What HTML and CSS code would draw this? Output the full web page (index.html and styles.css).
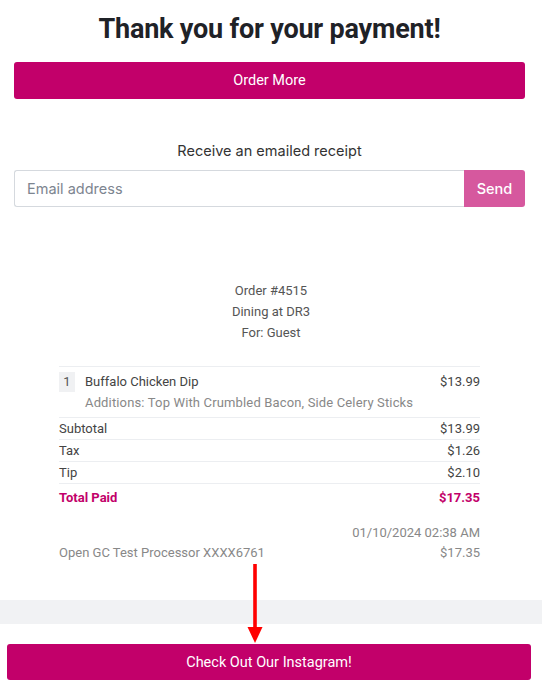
FILE: index.html
```html
<!DOCTYPE html>
<html>
<head>
<meta charset="utf-8">
<link rel="stylesheet" href="styles.css">
</head>
<body>
<main class="page">
  <section class="top">
    <h1 class="title">Thank you for your payment!</h1>
    <button class="btn btn-order">Order More</button>
    <p class="receipt-label">Receive an emailed receipt</p>
    <form class="email-form">
      <input class="email-input" type="text" placeholder="Email address">
      <button class="btn-send" type="button">Send</button>
    </form>
  </section>

  <section class="order-info">
    <div>Order #4515</div>
    <div>Dining at DR3</div>
    <div>For: Guest</div>
  </section>

  <section class="receipt">
    <div class="item-row">
      <span class="qty">1</span>
      <div class="item-main">
        <div class="item-line"><span>Buffalo Chicken Dip</span><span>$13.99</span></div>
        <div class="additions">Additions: Top With Crumbled Bacon, Side Celery Sticks</div>
      </div>
    </div>
    <div class="sum-row"><span>Subtotal</span><span>$13.99</span></div>
    <div class="sum-row"><span>Tax</span><span>$1.26</span></div>
    <div class="sum-row"><span>Tip</span><span>$2.10</span></div>
    <div class="sum-row total"><span>Total Paid</span><span>$17.35</span></div>

    <div class="payment">
      <div class="pay-date">01/10/2024 02:38 AM</div>
      <div class="pay-line"><span>Open GC Test Processor XXXX6761</span><span>$17.35</span></div>
    </div>
  </section>

  <div class="band"></div>

  <section class="bottom">
    <button class="btn btn-insta">Check Out Our Instagram!</button>
  </section>

  <svg class="arrow" width="20" height="80" viewBox="0 0 20 80">
    <rect x="8.2" y="0" width="3.6" height="66" fill="#ff0000"/>
    <polygon points="2.5,63 17.5,63 10,79" fill="#ff0000"/>
  </svg>
</main>
</body>
</html>
```

FILE: styles.css
```css
* { box-sizing: border-box; }
html, body { margin: 0; padding: 0; background: #fff; }
body {
  font-family: Roboto, "Liberation Sans", Arial, sans-serif;
  color: #333;
}
.page {
  position: relative;
  width: 542px;
  min-height: 699px;
}
.top {
  padding: 12px 17px 0 14px;
  display: flex;
  flex-direction: column;
}
.title {
  margin: 0;
  text-align: center;
  font-size: 27px;
  line-height: 34px;
  font-weight: 700;
  color: #1f2227;
  letter-spacing: -0.2px;
}
.btn {
  display: block;
  width: 100%;
  border: none;
  border-radius: 3px;
  background: #c2006a;
  color: #fff;
  font-family: Roboto, "Liberation Sans", Arial, sans-serif;
  font-size: 14.5px;
  cursor: pointer;
}
.btn-order {
  margin-top: 16px;
  height: 37px;
}
.receipt-label {
  margin: 42px 0 0;
  text-align: center;
  font-family: Inter, Roboto, sans-serif;
  font-size: 14.5px;
  line-height: 20px;
  color: #333;
}
.email-form {
  margin: 9px 0 0;
  display: flex;
  height: 37px;
}
.email-input {
  flex: 1;
  min-width: 0;
  border: 1px solid #d5d9de;
  border-right: none;
  border-radius: 3px 0 0 3px;
  padding: 0 12px;
  font-family: Inter, Roboto, sans-serif;
  font-size: 14.5px;
  color: #333;
  outline: none;
}
.email-input::placeholder { color: #7d8590; }
.btn-send {
  width: 61px;
  border: none;
  border-radius: 0 3px 3px 0;
  background: #d6589e;
  color: #fff;
  font-family: Inter, Roboto, sans-serif;
  font-size: 14.5px;
  font-weight: 500;
}
.order-info {
  margin-top: 73px;
  text-align: center;
  font-size: 13px;
  line-height: 21px;
  color: #555;
}
.receipt {
  margin: 23px 62px 0 59px;
  font-size: 13px;
  color: #444;
}
.item-row {
  display: flex;
  gap: 10px;
  border-top: 1px solid #eceef1;
  border-bottom: 1px solid #eceef1;
  padding: 5px 0 4px;
}
.qty {
  width: 16px;
  height: 20px;
  background: #f0f1f3;
  text-align: center;
  line-height: 20px;
  color: #555;
  flex: none;
}
.item-main { flex: 1; }
.item-line {
  display: flex;
  justify-content: space-between;
  line-height: 20px;
}
.additions {
  line-height: 21px;
  color: #888;
  letter-spacing: 0.15px;
}
.sum-row {
  display: flex;
  justify-content: space-between;
  line-height: 21px;
  border-bottom: 1px solid #eceef1;
}
.sum-row.total {
  border-bottom: none;
  font-weight: 700;
  color: #c2006a;
  line-height: 22px;
  padding-top: 3px;
}
.payment {
  margin-top: 14px;
  color: #888;
  line-height: 20px;
}
.pay-date { text-align: right; }
.pay-line {
  display: flex;
  justify-content: space-between;
}
.band {
  margin-top: 37px;
  height: 24px;
  background: #f1f2f4;
}
.bottom {
  padding: 20px 11px 0 7px;
}
.btn-insta {
  height: 36px;
}
.arrow {
  position: absolute;
  left: 245px;
  top: 564px;
}
```
